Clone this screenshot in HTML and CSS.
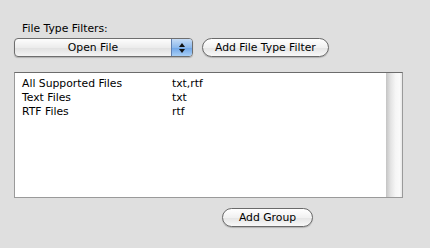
FILE: index.html
```html
<!DOCTYPE html>
<html lang="en">
<head>
  <meta charset="UTF-8" />
  <title>File Type Filters</title>
  <link rel="stylesheet" href="styles.css">
</head>
<body>
  <div class="panel">
    <div class="label">File Type Filters:</div>
    <div class="top-row">
      <div class="popup">
        <span class="popup-text">Open File</span>
        <span class="popup-arrows">
          <svg width="8" height="12" viewBox="0 0 8 12">
            <path d="M4 1 L7 5 L1 5 Z" fill="#111"/>
            <path d="M4 11 L7 7 L1 7 Z" fill="#111"/>
          </svg>
        </span>
      </div>
      <button class="pill">Add File Type Filter</button>
    </div>

    <!-- filter list -->
    <div class="list">
      <div class="rows">
        <div class="row"><span class="name">All Supported Files</span><span>txt,rtf</span></div>
        <div class="row"><span class="name">Text Files</span><span>txt</span></div>
        <div class="row"><span class="name">RTF Files</span><span>rtf</span></div>
      </div>
      <div class="scroll"></div>
    </div>

    <div class="bottom-row">
      <button class="pill group">Add Group</button>
    </div>
  </div>
</body>
</html>
```

FILE: styles.css
```css
body {
  margin: 0;
  background: #dfdfdf;
  font-family: "Lucida Grande", "DejaVu Sans", sans-serif;
  font-size: 10.8px;
  color: #000;
}
.panel {
  width: 430px;
  height: 248px;
  padding: 22px 0 0 14px;
  box-sizing: border-box;
}
.label {
  padding-left: 8px;
  height: 15px;
  line-height: 14px;
}
.top-row {
  display: flex;
  align-items: center;
  gap: 9px;
  height: 21px;
}
.popup {
  width: 179px;
  height: 19px;
  box-sizing: border-box;
  border: 1px solid #6e6e6e;
  border-radius: 4px;
  background: linear-gradient(#fdfdfd, #ececec 50%, #e0e0e0 51%, #f4f4f4);
  box-shadow: 0 1px 1px rgba(0,0,0,0.2);
  display: flex;
  overflow: hidden;
}
.popup-text {
  flex: 1;
  text-align: center;
  line-height: 17px;
}
.popup-arrows {
  width: 20px;
  border-left: 1px solid #5f7fb0;
  background: linear-gradient(#c6dcf6, #8db9ec 50%, #6ea4e6 51%, #a8cff6);
  display: flex;
  align-items: center;
  justify-content: center;
}
.pill {
  font: inherit;
  height: 19px;
  padding: 0 12px;
  border: 1px solid #6a6a6a;
  border-radius: 10px;
  background: linear-gradient(#ffffff, #f1f1f1 50%, #e4e4e4 51%, #f8f8f8);
  box-shadow: 0 1px 1px rgba(0,0,0,0.2);
  color: #000;
}
.list {
  margin-top: 14px;
  width: 389px;
  height: 126px;
  box-sizing: border-box;
  border: 1px solid #9a9a9a;
  border-top-color: #6c6c6c;
  background: #fff;
  display: flex;
}
.rows {
  flex: 1;
  padding: 4px 0 0 7px;
}
.row {
  display: flex;
  height: 14px;
  line-height: 14px;
}
.name {
  width: 150px;
}
.scroll {
  width: 16px;
  background: linear-gradient(90deg, #c4c4c4, #e4e4e4 30%, #f6f6f6 60%, #fafafa 85%, #e8e8e8);
}
.bottom-row {
  display: flex;
  padding: 10px 0 0 208px;
}
.group {
  width: 91px;
  padding: 0;
}
```
